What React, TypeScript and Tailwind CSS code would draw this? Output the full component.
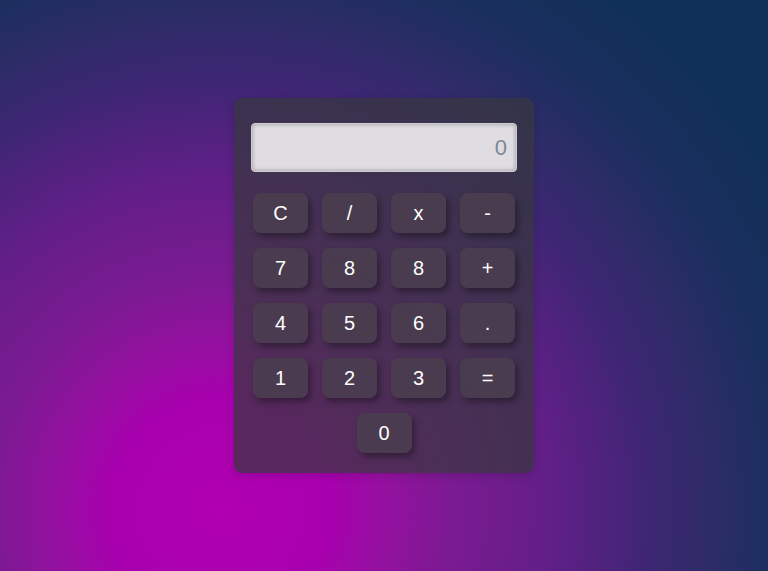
const keys = ["C", "/", "x", "-", "7", "8", "8", "+", "4", "5", "6", ".", "1", "2", "3", "="];

const Key = ({ label }: { label: string }) => (
  <button className="w-[55px] h-10 rounded-lg bg-[rgba(74,62,78,0.88)] text-white text-xl shadow-[3px_4px_6px_rgba(0,0,0,0.35)]">
    {label}
  </button>
);

export default function App() {
  return (
    <div
      className="w-full h-[571px] flex items-center justify-center bg-[radial-gradient(circle_at_220px_510px,#b000b0_0px,#a800ae_110px,#9510a0_165px,#7c1a92_230px,#621f88_330px,#3e2674_430px,#2e2c68_490px,#1a2f5e_560px,#0f3057_660px)]"
      style={{ fontFamily: '"Liberation Sans", Arial, sans-serif' }}
    >
      <div className="w-[300px] h-[375px] rounded-lg bg-[rgba(55,55,62,0.72)] pt-[25px] px-[17px] shadow-[0_2px_8px_rgba(0,0,0,0.15)]">
        <div className="h-[49px] rounded bg-[#dfdde2] border border-[#cfcdd3] shadow-[inset_0_0_4px_rgba(0,0,0,0.35)] flex items-center justify-end pr-[9px] text-[22px] text-[#7a8898]">
          0
        </div>
        <div className="mt-[21px] grid grid-cols-[repeat(4,55px)] justify-center gap-x-[14px] gap-y-[15px]">
          {keys.map((k, i) => (
            <Key key={i} label={k} />
          ))}
        </div>
        <div className="mt-[15px] flex justify-center">
          <Key label="0" />
        </div>
      </div>
    </div>
  );
}
